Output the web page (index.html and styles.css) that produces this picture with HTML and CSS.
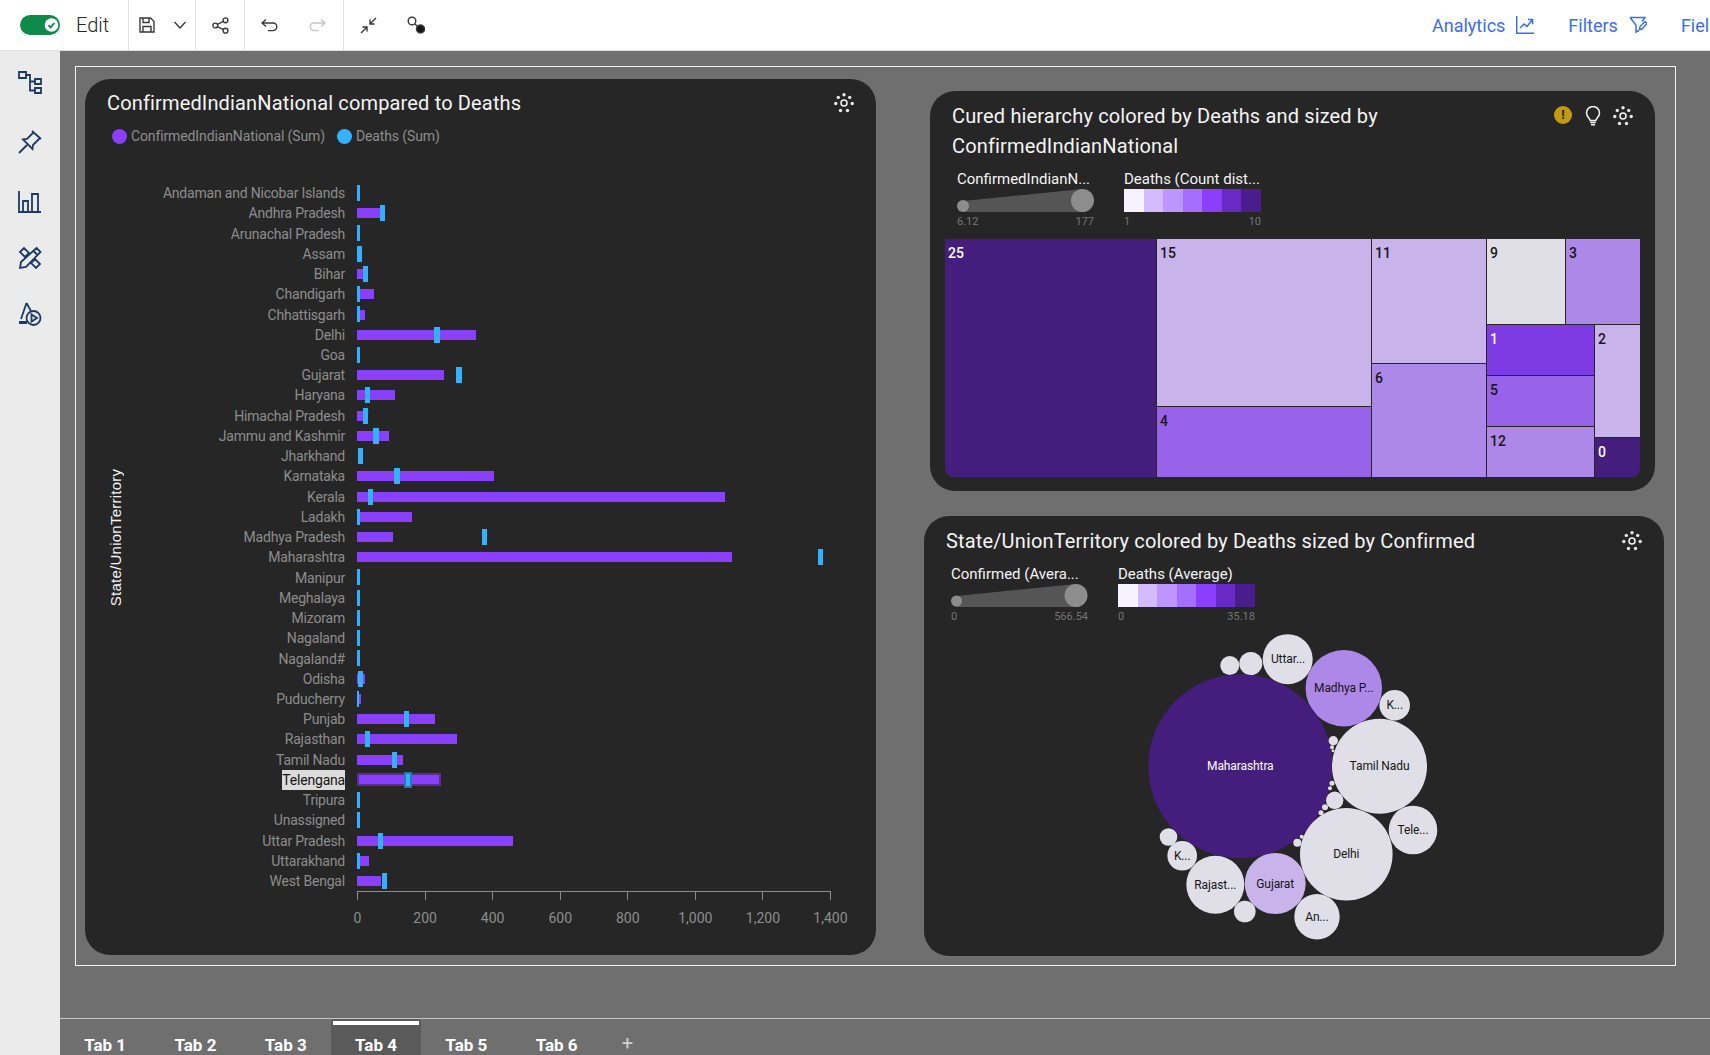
FILE: index.html
```html
<!DOCTYPE html>
<html lang="en">
<head>
    <meta charset="UTF-8">
    <meta name="viewport" content="width=device-width, initial-scale=1.0">
    <title>COVID-19 India Dashboard</title>
    <link rel="stylesheet" href="styles.css">
</head>
<body>

    <!-- shared icon -->
    <svg class="defs" aria-hidden="true">
        <symbol id="dots" viewBox="0 0 20 20">
            <circle cx="10" cy="10" r="3" fill="none" stroke="#f4f4f4" stroke-width="1.5"/>
            <g fill="#e8e8e8">
                <circle cx="10" cy="1.8" r="1.7"/>
                <circle cx="4.3" cy="4.4" r="1.7"/>
                <circle cx="15.700" cy="4.4" r="1.7"/>
                <circle cx="1.8" cy="10.5" r="1.7"/>
                <circle cx="18.200" cy="10.5" r="1.7"/>
                <circle cx="6.5" cy="17.500" r="1.7"/>
                <circle cx="13.5" cy="17.500" r="1.7"/>
            </g>
        </symbol>
    </svg>

    <header class="toolbar">
        <div class="tool-group edit-group">
            <svg class="toggle" width="40" height="20" viewBox="0 0 40 20">
                <rect width="40" height="20" rx="10" fill="#0e8a4b"/>
                <circle cx="31.5" cy="10" r="6.8" fill="#fff"/>
                <path d="M28.4 10.2l2.2 2.2 3.8-4.4" fill="none" stroke="#0e8a4b" stroke-width="1.8"/>
            </svg>
            <span class="edit-label">Edit</span>
        </div>
        <div class="tool-group">
            <button class="tool save-btn">
                <svg class="ico" width="16" height="16" viewBox="0 0 16 16"><path d="M1 1h10.5L15 4.5V15H1zM4 1v4.5h6V1M4 15V9.5h8V15"/></svg>
            </button>
            <button class="tool caret-btn">
                <svg class="ico" width="14" height="14" viewBox="0 0 14 14"><path d="M1.5 4l5.5 6 5.5-6"/></svg>
            </button>
        </div>
        <div class="tool-group">
            <button class="tool">
                <svg class="ico" width="17" height="17" viewBox="0 0 17 17"><circle cx="13.5" cy="3.3" r="2.4"/><circle cx="3.3" cy="8.5" r="2.4"/><circle cx="13.5" cy="13.7" r="2.4"/><path d="M5.4 7.4l6-3M5.4 9.6l6 3"/></svg>
            </button>
        </div>
        <div class="tool-group undo-group">
            <button class="tool">
                <svg class="ico" width="17" height="13" viewBox="0 0 17 13"><path d="M1 4h11a3.8 3.8 0 0 1 0 7.6H7M5 .5L1 4l4 3.5"/></svg>
            </button>
            <button class="tool">
                <svg class="ico ico-off" width="17" height="13" viewBox="0 0 17 13"><path d="M16 4H5a3.8 3.8 0 0 0 0 7.6h5M12 .5L16 4l-4 3.5"/></svg>
            </button>
        </div>
        <div class="tool-group no-line">
            <button class="tool">
                <svg class="ico" width="17" height="17" viewBox="0 0 17 17"><path d="M16 1L10 7M10 2.5V7h4.5M1 16l6-6M2.5 10H7v4.5"/></svg>
            </button>
            <button class="tool">
                <svg class="ico" width="18" height="18" viewBox="0 0 18 18"><circle cx="5" cy="5" r="3.8"/><path d="M8 8l3 3"/><circle cx="13.5" cy="13" r="4" fill="#161616"/></svg>
            </button>
        </div>
        <nav class="panel-links">
            <a href="#">Analytics
                <svg class="link-ico" width="18" height="18" viewBox="0 0 18 18"><path d="M.7 0v17.3H18M4 12l4-4 3 2.4L16 4.2M12 3.6h4.6v4.6"/></svg>
            </a>
            <a href="#">Filters
                <svg class="link-ico" width="18" height="18" viewBox="0 0 18 18"><path d="M1 1.5h15L13 5.500M1 1.500l6 7.500v7l3-1.500M10.500 13.500l.5-3 5-5 2 2-5 5.500z"/></svg>
            </a>
            <a href="#">Fields</a>
        </nav>
    </header>

    <div class="app-body">
        <aside class="sidebar">
            <svg class="side-ico" width="24" height="24" viewBox="0 0 24 24"><path d="M1 2h7v6H1zM17 9h6v5h-6zM17 18h6v5h-6zM8 5h4v15.500h5M12 11.500h5"/></svg>
            <svg class="side-ico" width="24" height="24" viewBox="0 0 24 24"><path d="M1 23l8-8M14 1l9 8M15.500 2.500L9 9l-4 .5 9.500 9.500.5-4 6.500-6.500"/></svg>
            <svg class="side-ico" width="24" height="24" viewBox="0 0 24 24"><path d="M1 1v21h22M5 22V11h5v11M14 22V4h6v18"/></svg>
            <svg class="side-ico tight" width="24" height="24" viewBox="0 0 24 24">
                <path d="M2 6l4-4 5 5-4 4zM13 17l4-4 5 5-4 4z"/>
                <path class="over" d="M18.500 2l4 4L8 21l-6 1 1-6z"/>
                <path d="M15.500 5l4 4"/>
            </svg>
            <svg class="side-ico tight" width="24" height="24" viewBox="0 0 24 24">
                <path d="M8.500 1L3 17M8.500 1l5 9"/>
                <path class="base" d="M1 20.500h8"/>
                <circle class="over" cx="15.500" cy="16" r="7"/>
                <path d="M13.500 12.500v7l5.500-3.500z"/>
            </svg>
        </aside>

        <div class="workspace">
            <main class="canvas">
                <div class="board">

                    <!-- bar chart -->
                    <section class="card card-bars">
                        <div class="card-head">
                            <h2>ConfirmedIndianNational compared to Deaths</h2>
                            <div class="card-actions">
                                <svg width="20" height="20"><use href="#dots"/></svg>
                            </div>
                        </div>
                        <div class="legend">
                            <span class="legend-item"><i class="dot dot-purple"></i>ConfirmedIndianNational (Sum)</span>
                            <span class="legend-item"><i class="dot dot-blue"></i>Deaths (Sum)</span>
                        </div>
                        <div class="bars-wrap">
                            <div class="y-title">State/UnionTerritory</div>
                            <div class="rows">
                                <div class="row"><span class="row-label">Andaman and Nicobar Islands</span><div class="track"><i class="mark" style="left:0;width:3px"></i></div></div>
                                <div class="row"><span class="row-label">Andhra Pradesh</span><div class="track"><i class="bar" style="width:24px"></i><i class="mark" style="left:23px;width:5px"></i></div></div>
                                <div class="row"><span class="row-label">Arunachal Pradesh</span><div class="track"><i class="mark" style="left:0;width:3px"></i></div></div>
                                <div class="row"><span class="row-label">Assam</span><div class="track"><i class="mark" style="left:0;width:5px"></i></div></div>
                                <div class="row"><span class="row-label">Bihar</span><div class="track"><i class="bar" style="width:7px"></i><i class="mark" style="left:6px;width:5px"></i></div></div>
                                <div class="row"><span class="row-label">Chandigarh</span><div class="track"><i class="bar" style="width:17px"></i><i class="mark" style="left:0;width:3px"></i></div></div>
                                <div class="row"><span class="row-label">Chhattisgarh</span><div class="track"><i class="bar" style="width:8px"></i><i class="mark" style="left:0;width:3px"></i></div></div>
                                <div class="row"><span class="row-label">Delhi</span><div class="track"><i class="bar" style="width:119px"></i><i class="mark" style="left:77px;width:6px"></i></div></div>
                                <div class="row"><span class="row-label">Goa</span><div class="track"><i class="mark" style="left:0;width:3px"></i></div></div>
                                <div class="row"><span class="row-label">Gujarat</span><div class="track"><i class="bar" style="width:87px"></i><i class="mark" style="left:99px;width:6px"></i></div></div>
                                <div class="row"><span class="row-label">Haryana</span><div class="track"><i class="bar" style="width:38px"></i><i class="mark" style="left:8px;width:5px"></i></div></div>
                                <div class="row"><span class="row-label">Himachal Pradesh</span><div class="track"><i class="bar" style="width:7px"></i><i class="mark" style="left:6px;width:5px"></i></div></div>
                                <div class="row"><span class="row-label">Jammu and Kashmir</span><div class="track"><i class="bar" style="width:32px"></i><i class="mark" style="left:16px;width:6px"></i></div></div>
                                <div class="row"><span class="row-label">Jharkhand</span><div class="track"><i class="mark" style="left:1px;width:5px"></i></div></div>
                                <div class="row"><span class="row-label">Karnataka</span><div class="track"><i class="bar" style="width:137px"></i><i class="mark" style="left:37px;width:6px"></i></div></div>
                                <div class="row"><span class="row-label">Kerala</span><div class="track"><i class="bar" style="width:368px"></i><i class="mark" style="left:11px;width:5px"></i></div></div>
                                <div class="row"><span class="row-label">Ladakh</span><div class="track"><i class="bar" style="width:55px"></i><i class="mark" style="left:0;width:3px"></i></div></div>
                                <div class="row"><span class="row-label">Madhya Pradesh</span><div class="track"><i class="bar" style="width:36px"></i><i class="mark" style="left:125px;width:5px"></i></div></div>
                                <div class="row"><span class="row-label">Maharashtra</span><div class="track"><i class="bar" style="width:375px"></i><i class="mark" style="left:461px;width:5px"></i></div></div>
                                <div class="row"><span class="row-label">Manipur</span><div class="track"><i class="mark" style="left:0;width:2.5px"></i></div></div>
                                <div class="row"><span class="row-label">Meghalaya</span><div class="track"><i class="mark" style="left:0;width:3px"></i></div></div>
                                <div class="row"><span class="row-label">Mizoram</span><div class="track"><i class="mark" style="left:0;width:2.5px"></i></div></div>
                                <div class="row"><span class="row-label">Nagaland</span><div class="track"><i class="mark" style="left:0;width:2.5px"></i></div></div>
                                <div class="row"><span class="row-label">Nagaland#</span><div class="track"><i class="mark" style="left:0;width:2.5px"></i></div></div>
                                <div class="row"><span class="row-label">Odisha</span><div class="track"><i class="bar" style="width:8px"></i><i class="mark" style="left:.5px;width:5px"></i></div></div>
                                <div class="row"><span class="row-label">Puducherry</span><div class="track"><i class="bar" style="width:3.500px"></i><i class="mark" style="left:0;width:2px"></i></div></div>
                                <div class="row"><span class="row-label">Punjab</span><div class="track"><i class="bar" style="width:78px"></i><i class="mark" style="left:47px;width:5px"></i></div></div>
                                <div class="row"><span class="row-label">Rajasthan</span><div class="track"><i class="bar" style="width:100px"></i><i class="mark" style="left:7.500px;width:5px"></i></div></div>
                                <div class="row"><span class="row-label">Tamil Nadu</span><div class="track"><i class="bar" style="width:46px"></i><i class="mark" style="left:35px;width:5px"></i></div></div>
                                <div class="row is-hover"><span class="row-label">Telengana</span><div class="track"><i class="bar" style="width:84px"></i><i class="mark" style="left:47px;width:8px"></i></div></div>
                                <div class="row"><span class="row-label">Tripura</span><div class="track"><i class="mark" style="left:0;width:2.5px"></i></div></div>
                                <div class="row"><span class="row-label">Unassigned</span><div class="track"><i class="mark" style="left:0;width:2.5px"></i></div></div>
                                <div class="row"><span class="row-label">Uttar Pradesh</span><div class="track"><i class="bar" style="width:156px"></i><i class="mark" style="left:21px;width:5px"></i></div></div>
                                <div class="row"><span class="row-label">Uttarakhand</span><div class="track"><i class="bar" style="width:12px"></i><i class="mark" style="left:0;width:2.5px"></i></div></div>
                                <div class="row"><span class="row-label">West Bengal</span><div class="track"><i class="bar" style="width:24px"></i><i class="mark" style="left:25px;width:5px"></i></div></div>
                            </div>
                        </div>
                        <div class="x-axis">
                            <div class="tick"><i></i><span>0</span></div>
                            <div class="tick"><i></i><span>200</span></div>
                            <div class="tick"><i></i><span>400</span></div>
                            <div class="tick"><i></i><span>600</span></div>
                            <div class="tick"><i></i><span>800</span></div>
                            <div class="tick"><i></i><span>1,000</span></div>
                            <div class="tick"><i></i><span>1,200</span></div>
                            <div class="tick"><i></i><span>1,400</span></div>
                        </div>
                    </section>

                    <div class="right-col">
                        <!-- treemap -->
                        <section class="card card-tree">
                            <div class="card-head">
                                <h2 class="title-wrap">Cured hierarchy colored by Deaths and sized by ConfirmedIndianNational</h2>
                                <div class="card-actions">
                                    <span class="warn">!</span>
                                    <svg class="bulb" width="16" height="20" viewBox="0 0 16 20"><path d="M5.200 14.500C4.800 12 1.500 10.800 1.500 7a6.500 6.500 0 0 1 13 0c0 3.800-3.300 5-3.700 7.500zM5.200 16.500h5.600M6 18.800h4"/></svg>
                                    <svg width="20" height="20"><use href="#dots"/></svg>
                                </div>
                            </div>
                            <div class="scales">
                                <div class="scale">
                                    <div class="scale-title">ConfirmedIndianN...</div>
                                    <svg class="ramp" width="137" height="23" viewBox="0 0 137 23"><path d="M6 12L125.500 0V23H6z" fill="#555"/><circle cx="6" cy="17" r="6" fill="#8d8d8d"/><circle cx="125.500" cy="11.500" r="11.500" fill="#8d8d8d"/></svg>
                                    <div class="scale-ends"><span>6.12</span><span>177</span></div>
                                </div>
                                <div class="scale">
                                    <div class="scale-title">Deaths (Count dist...</div>
                                    <div class="swatches"><i></i><i></i><i></i><i></i><i></i><i></i><i></i></div>
                                    <div class="scale-ends"><span>1</span><span>10</span></div>
                                </div>
                            </div>
                            <div class="treemap">
                                <div class="cell tone-dark" style="width:211px">25</div>
                                <div class="tm-col" style="width:214px">
                                    <div class="cell tone-pale" style="height:167px">15</div>
                                    <div class="cell tone-mid" style="height:70px">4</div>
                                </div>
                                <div class="tm-col" style="width:114px">
                                    <div class="cell tone-pale" style="height:124px">11</div>
                                    <div class="cell tone-soft" style="height:113px">6</div>
                                </div>
                                <div class="tm-col" style="width:153px">
                                    <div class="tm-row" style="height:85px">
                                        <div class="cell tone-grey" style="width:78px">9</div>
                                        <div class="cell tone-soft" style="width:74px">3</div>
                                    </div>
                                    <div class="tm-row" style="height:152px">
                                        <div class="tm-col" style="width:107px">
                                            <div class="cell tone-vivid" style="height:50px">1</div>
                                            <div class="cell tone-mid" style="height:50px">5</div>
                                            <div class="cell tone-soft" style="height:50px">12</div>
                                        </div>
                                        <div class="tm-col" style="width:45px">
                                            <div class="cell tone-pale" style="height:112px">2</div>
                                            <div class="cell tone-dark" style="height:39px">0</div>
                                        </div>
                                    </div>
                                </div>
                            </div>
                        </section>

                        <!-- packed bubbles -->
                        <section class="card card-bubbles">
                            <div class="card-head">
                                <h2>State/UnionTerritory colored by Deaths sized by Confirmed</h2>
                                <div class="card-actions">
                                    <svg width="20" height="20"><use href="#dots"/></svg>
                                </div>
                            </div>
                            <div class="scales">
                                <div class="scale">
                                    <div class="scale-title">Confirmed (Avera...</div>
                                    <svg class="ramp" width="137" height="23" viewBox="0 0 137 23"><path d="M5.500 12L125 0V23H5.500z" fill="#555"/><circle cx="5.500" cy="17" r="5.500" fill="#8d8d8d"/><circle cx="125" cy="11.500" r="11.500" fill="#8d8d8d"/></svg>
                                    <div class="scale-ends"><span>0</span><span>566.54</span></div>
                                </div>
                                <div class="scale">
                                    <div class="scale-title">Deaths (Average)</div>
                                    <div class="swatches"><i></i><i></i><i></i><i></i><i></i><i></i><i></i></div>
                                    <div class="scale-ends"><span>0</span><span>35.18</span></div>
                                </div>
                            </div>
                            <svg class="bubbles" width="300" height="320" viewBox="1140 625 300 320">
                                <circle class="b-grey" cx="1229.800" cy="665.500" r="9.500"/>
                                <circle class="b-grey" cx="1250.800" cy="663.500" r="11.500"/>
                                <circle class="b-grey" cx="1287.700" cy="659.200" r="25"/>
                                <circle class="b-soft" cx="1343.800" cy="688.200" r="38.200"/>
                                <circle class="b-grey" cx="1394.700" cy="705.200" r="15.300"/>
                                <circle class="b-dark" cx="1240.300" cy="766.200" r="92"/>
                                <circle class="b-grey" cx="1379.500" cy="766.200" r="47.500"/>
                                <circle class="b-grey" cx="1346.300" cy="854.200" r="46.300"/>
                                <circle class="b-grey" cx="1413" cy="830" r="24.300"/>
                                <circle class="b-pale" cx="1275.200" cy="883.500" r="30.500"/>
                                <circle class="b-grey" cx="1215.300" cy="884.700" r="29"/>
                                <circle class="b-grey" cx="1317" cy="916.700" r="22.700"/>
                                <circle class="b-grey" cx="1182.200" cy="855.800" r="14.800"/>
                                <circle class="b-grey" cx="1168.500" cy="837" r="8.800"/>
                                <circle class="b-grey" cx="1244.800" cy="911.500" r="10.800"/>
                                <circle class="b-grey" cx="1334.700" cy="800.300" r="8.700"/>
                                <circle class="b-grey" cx="1333.300" cy="740.700" r="4.700"/>
                                <circle class="b-grey" cx="1332" cy="747.300" r="2"/>
                                <circle class="b-grey" cx="1333" cy="750.700" r="1.500"/>
                                <circle class="b-grey" cx="1332" cy="783.300" r="2.500"/>
                                <circle class="b-grey" cx="1330" cy="788.300" r="2"/>
                                <circle class="b-grey" cx="1325" cy="807.300" r="3"/>
                                <circle class="b-grey" cx="1321" cy="812.700" r="2.500"/>
                                <circle class="b-grey" cx="1297.300" cy="842.700" r="4"/>
                                <circle class="b-grey" cx="1301.700" cy="836.700" r="2"/>
                                <text class="b-text b-text-light" x="1240.300" y="766.200">Maharashtra</text>
                                <text class="b-text" x="1379.500" y="766.200">Tamil Nadu</text>
                                <text class="b-text" x="1346.300" y="854.200">Delhi</text>
                                <text class="b-text" x="1288" y="659.200">Uttar...</text>
                                <text class="b-text" x="1343.800" y="688.200">Madhya P...</text>
                                <text class="b-text" x="1394.700" y="705.200">K...</text>
                                <text class="b-text" x="1413" y="830">Tele...</text>
                                <text class="b-text" x="1275.200" y="883.500">Gujarat</text>
                                <text class="b-text" x="1215.300" y="884.700">Rajast...</text>
                                <text class="b-text" x="1317" y="916.700">An...</text>
                                <text class="b-text" x="1182.200" y="855.800">K...</text>
                            </svg>
                        </section>
                    </div>
                </div>
            </main>

            <div class="tabs">
                <a class="tab" href="#">Tab 1</a>
                <a class="tab" href="#">Tab 2</a>
                <a class="tab" href="#">Tab 3</a>
                <a class="tab active" href="#">Tab 4</a>
                <a class="tab" href="#">Tab 5</a>
                <a class="tab" href="#">Tab 6</a>
                <span class="tab-add">+</span>
            </div>
        </div>
    </div>

</body>
</html>
```

FILE: styles.css
```css
* {
    box-sizing: border-box;
}
html, body {
    margin: 0;
    padding: 0;
}
body {
    width: 1710px;
    height: 1055px;
    overflow: hidden;
    display: flex;
    flex-direction: column;
    font-family: Roboto, "Noto Sans", sans-serif;
    background-color: #6f6f6f;
}
.defs {
    display: none;
}

/* top toolbar */
.toolbar {
    height: 51px;
    flex: none;
    display: flex;
    background-color: #fff;
    border-bottom: 1px solid #e0e0e0;
    overflow: hidden;
}
.tool-group {
    display: flex;
    align-items: center;
    flex: none;
    border-right: 1px solid #e0e0e0;
}
.tool-group.no-line {
    border-right: none;
}
.edit-group {
    width: 129px;
    padding-left: 20px;
    gap: 16px;
}
.edit-label {
    font-size: 20px;
    font-weight: 300;
    color: #262626;
}
.tool {
    width: 48px;
    height: 50px;
    padding: 0;
    border: none;
    background: none;
    display: flex;
    align-items: center;
    justify-content: center;
}
.tool.save-btn {
    width: 36px;
}
.tool.caret-btn {
    width: 30px;
}
.undo-group {
    padding-right: 2px;
}
.ico {
    fill: none;
    stroke: #393939;
    stroke-width: 1.4;
}
.ico-off {
    stroke: #c6c6c6;
}
.panel-links {
    margin-left: 992px;
    display: flex;
    align-items: center;
    gap: 34px;
    flex: none;
}
.panel-links a {
    display: flex;
    align-items: center;
    gap: 11px;
    font-size: 18px;
    color: #3a6cf6;
    text-decoration: none;
}
.link-ico {
    fill: none;
    stroke: #3a6cf6;
    stroke-width: 1.5;
}

/* main area */
.app-body {
    flex: 1;
    display: flex;
    min-height: 0;
}
.sidebar {
    width: 60px;
    flex: none;
    background-color: #ebebeb;
    display: flex;
    flex-direction: column;
    align-items: center;
    padding-top: 19px;
    gap: 36px;
}
.side-ico {
    fill: none;
    stroke: #1b3a66;
    stroke-width: 1.8;
}
.side-ico.tight {
    margin-top: -4px;
}
.side-ico .over {
    fill: #ebebeb;
}
.side-ico .base {
    stroke-width: 3;
}
.workspace {
    flex: 1;
    display: flex;
    flex-direction: column;
    min-width: 0;
}
.canvas {
    flex: 1;
    padding: 15px;
}
.board {
    width: 1601px;
    height: 900px;
    border: 1px solid #f4f4f4;
    padding: 12px 9px;
    display: flex;
}

/* cards */
.card {
    flex: none;
    background-color: #262626;
    border-radius: 25px;
    color: #f4f4f4;
}
.card-head {
    display: flex;
    justify-content: space-between;
    padding: 9px 22px 0;
}
.card-head h2 {
    margin: 0;
    font-size: 20px;
    font-weight: 400;
    line-height: 30px;
    letter-spacing: .15px;
}
.card-head h2.title-wrap {
    width: 460px;
}
.card-actions {
    display: flex;
    align-items: flex-start;
    gap: 12px;
    height: 30px;
    padding-top: 5px;
}
.warn {
    width: 18px;
    height: 18px;
    margin-right: 1px;
    border-radius: 50%;
    background-color: #c49a14;
    color: #262626;
    font-size: 13px;
    font-weight: 700;
    line-height: 18px;
    text-align: center;
}
.bulb {
    fill: none;
    stroke: #f4f4f4;
    stroke-width: 1.500;
}

/* bar chart */
.card-bars {
    width: 791px;
    height: 876px;
}
.legend {
    display: flex;
    gap: 12px;
    margin: 8px 0 0 27px;
    height: 20px;
}
.legend-item {
    display: flex;
    align-items: center;
    gap: 4px;
    font-size: 14px;
    letter-spacing: -.12px;
    color: #8d8d8d;
}
.dot {
    width: 15px;
    height: 15px;
    border-radius: 50%;
}
.dot-purple {
    background-color: #8a3ffc;
}
.dot-blue {
    background-color: #33b1ff;
}
.bars-wrap {
    display: flex;
    margin-top: 37px;
    padding-left: 23px;
}
.y-title {
    width: 16px;
    flex: none;
    writing-mode: vertical-rl;
    transform: rotate(180deg);
    text-align: center;
    font-family: "Liberation Sans", Arial, sans-serif;
    font-size: 15px;
    letter-spacing: .25px;
    line-height: 16px;
    color: #f4f4f4;
}
.rows {
    flex: 1;
    display: grid;
    grid-template-rows: repeat(35, 20.235px);
}
.row {
    display: grid;
    grid-template-columns: 221px 1fr;
    column-gap: 12px;
    align-items: center;
}
.row-label {
    justify-self: end;
    font-size: 14px;
    line-height: 20px;
    letter-spacing: -.2px;
    color: #8d8d8d;
    white-space: nowrap;
}
.track {
    position: relative;
    height: 100%;
    display: flex;
    align-items: center;
}
.bar {
    height: 10px;
    background-color: #8a3ffc;
}
.mark {
    position: absolute;
    top: 2px;
    height: 16px;
    background-color: #33b1ff;
}
.is-hover .row-label {
    background-color: #dcdcdc;
    color: #161616;
}
.is-hover .bar {
    height: 13px;
    border: 2px solid #5b2c9e;
}
.is-hover .mark {
    border: 2px solid #1f7cb3;
    background-color: #33b1ff;
}
.x-axis {
    margin-left: 272px;
    width: 474px;
    display: flex;
    justify-content: space-between;
    border-top: 1px solid #8d8d8d;
}
.tick {
    width: 1px;
    display: flex;
    flex-direction: column;
    align-items: center;
}
.tick i {
    width: 1px;
    height: 8px;
    flex: none;
    background-color: #8d8d8d;
}
.tick span {
    margin-top: 8px;
    font-size: 14px;
    line-height: 20px;
    color: #8d8d8d;
    white-space: nowrap;
}

/* right column */
.right-col {
    margin: 12px 0 0 48px;
    display: flex;
    flex-direction: column;
    gap: 25px;
}
.card-tree {
    margin-left: 6px;
    width: 725px;
    height: 400px;
}
.card-tree .card-head {
    padding-top: 10px;
}
.card-bubbles {
    width: 740px;
    height: 440px;
}
.card-bubbles .card-head {
    padding-top: 10px;
}
.scales {
    display: flex;
    gap: 30px;
    margin: 9px 0 0 27px;
}
.scale {
    width: 137px;
}
.scale-title {
    font-size: 15px;
    line-height: 18px;
    height: 18px;
    margin-bottom: 1px;
    white-space: nowrap;
    color: #f4f4f4;
}
.ramp {
    display: block;
}
.swatches {
    display: flex;
    height: 23px;
}
.swatches i {
    flex: 1;
}
.swatches i:nth-child(1) { background-color: #f6f2ff; }
.swatches i:nth-child(2) { background-color: #d4bbff; }
.swatches i:nth-child(3) { background-color: #be95ff; }
.swatches i:nth-child(4) { background-color: #a56eff; }
.swatches i:nth-child(5) { background-color: #8a3ffc; }
.swatches i:nth-child(6) { background-color: #6929c4; }
.swatches i:nth-child(7) { background-color: #491d8b; }
.scale-ends {
    display: flex;
    justify-content: space-between;
    margin-top: 3px;
    font-size: 11px;
    line-height: 14px;
    color: #757575;
}

/* treemap */
.treemap {
    display: flex;
    gap: 1px;
    width: 695px;
    height: 238px;
    margin: 10px 0 0 15px;
    border-radius: 0 0 8px 8px;
    overflow: hidden;
}
.tm-col {
    display: flex;
    flex-direction: column;
    gap: 1px;
}
.tm-row {
    display: flex;
    gap: 1px;
}
.cell {
    padding: 4px 3px 0;
    font-size: 14px;
    font-weight: 500;
    line-height: 20px;
    color: #161616;
}
.tone-dark { background-color: #441d7d; color: #fff; }
.tone-vivid { background-color: #7e3ae3; color: #fff; }
.tone-mid { background-color: #9863e8; }
.tone-soft { background-color: #ad88e8; }
.tone-pale { background-color: #c8b4ea; }
.tone-grey { background-color: #e0dfe8; }

/* bubbles */
.bubbles {
    display: block;
    margin: 1px 0 0 216px;
}
.b-grey { fill: #e0dfe8; }
.b-soft { fill: #ad88e8; }
.b-pale { fill: #c8b4ea; }
.b-dark { fill: #441d7d; }
.b-text {
    font-size: 12px;
    letter-spacing: -.1px;
    fill: #161616;
    text-anchor: middle;
    dominant-baseline: central;
}
.b-text-light {
    fill: #fff;
}

/* tabs */
.tabs {
    height: 37px;
    flex: none;
    display: flex;
    border-top: 1px solid #c6c6c6;
    overflow: hidden;
}
.tab {
    position: relative;
    width: 90.3px;
    padding-top: 16px;
    text-align: center;
    font-size: 17px;
    font-weight: 700;
    line-height: 20px;
    color: #fff;
    text-decoration: none;
}
.tab.active {
    background-color: #5a5a5a;
}
.tab.active::before {
    content: "";
    position: absolute;
    top: 2px;
    left: 2px;
    right: 2px;
    height: 4px;
    background-color: #fff;
}
.tab-add {
    margin-left: 20px;
    padding-top: 12px;
    font-size: 20px;
    line-height: 24px;
    color: #d0d0d0;
}
```
